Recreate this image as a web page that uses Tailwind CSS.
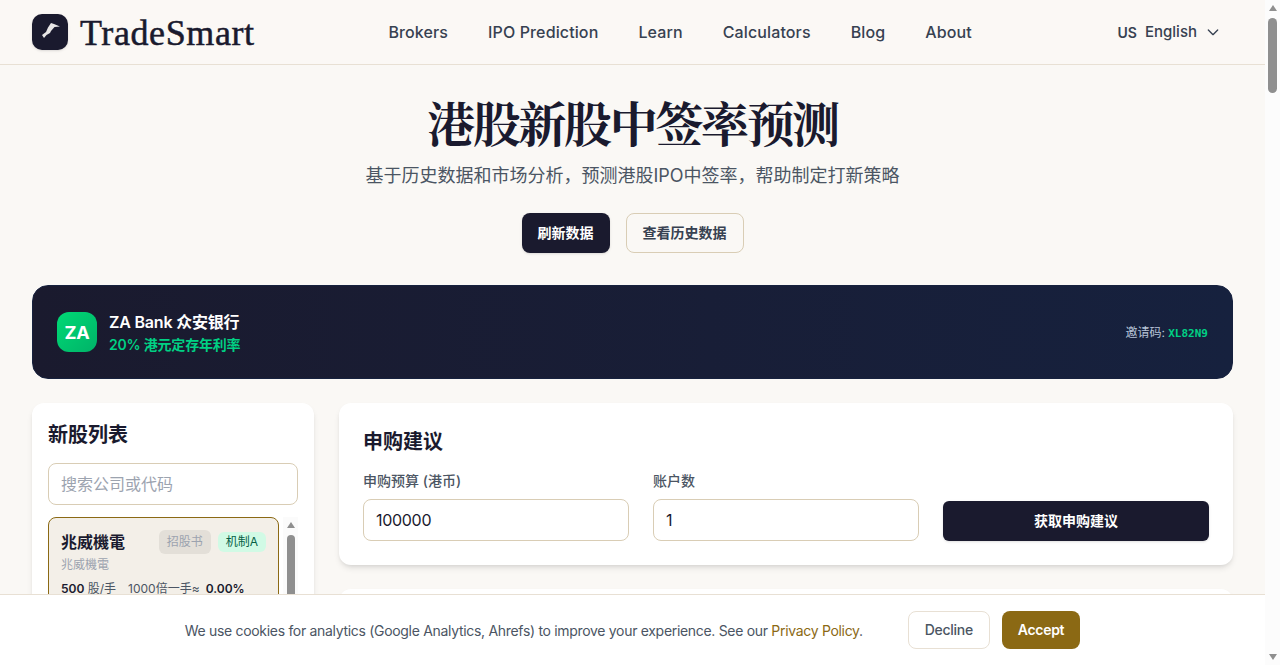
<!DOCTYPE html>
<html lang="zh">
<head>
    <meta charset="UTF-8">
    <meta name="viewport" content="width=device-width, initial-scale=1.0">
    <title>港股新股中签率预测 - TradeSmart</title>
    <script src="https://cdn.jsdelivr.net/npm/@tailwindcss/browser@4"></script>
</head>
<body class="pr-[15px] bg-[#faf8f5] text-[#1a1a2e] font-['Inter','Noto_Sans_CJK_SC',sans-serif]">
    <!-- Header -->
    <header class="h-[65px] px-8 flex items-center justify-between border-b border-[#e8e0d4] bg-[#fbf8f5]">
        <a href="#" class="flex items-center gap-3">
            <span class="w-9 h-9 rounded-[10px] bg-[#1a1a2e] flex items-center justify-center shadow-sm">
                <svg class="w-5 h-5" viewBox="0 0 20 20" fill="#e8e6e6">
                    <path d="M2 13 L6 10 L8 5.5 L11 1 L14 2 L20 4.5 L14.5 5 L11 9 L10 11 L6.5 13 L4 16 Z"/>
                </svg>
            </span>
            <span class="font-['Liberation_Serif',serif] text-4xl leading-none mt-0.5 text-[#1a1a2e] tracking-[0.6px] [-webkit-text-stroke:0.5px_#1a1a2e]">TradeSmart</span>
        </a>
        <nav class="flex items-center gap-10 text-base font-medium tracking-[0.12px] text-[#374151]">
            <a href="#">Brokers</a>
            <a href="#">IPO Prediction</a>
            <a href="#">Learn</a>
            <a href="#">Calculators</a>
            <a href="#">Blog</a>
            <a href="#">About</a>
        </nav>
        <button class="flex items-center px-3 py-2 text-[#374151] text-[15px] font-medium">
            <span class="text-sm font-semibold mr-2 mt-0.5">US</span>
            <span class="mt-px">English</span>
            <svg class="w-4 h-4 ml-2" viewBox="0 0 24 24" fill="none" stroke="currentColor" stroke-width="2" stroke-linecap="round" stroke-linejoin="round"><path d="m5 9 7 7 7-7"/></svg>
        </button>
    </header>

    <main class="px-8 pt-7 pb-10">
        <!-- Hero -->
        <section class="text-center">
            <h1 class="text-5xl leading-[66px] font-bold tracking-[-2.4px] font-['Liberation_Serif','Noto_Serif_CJK_SC','Noto_Sans_CJK_SC',serif] text-[#1a1a2e]">港股新股中签率预测</h1>
            <p class="mt-[3px] text-lg leading-7 text-[#4b5563]">基于历史数据和市场分析，预测港股IPO中签率，帮助制定打新策略</p>
            <div class="mt-[23px] flex justify-center gap-4">
                <button class="h-10 px-4 rounded-lg bg-[#1a1a2e] text-white text-sm font-semibold shadow-sm">刷新数据</button>
                <button class="h-10 px-4 rounded-lg border border-[#d9cdb5] text-[#374151] text-sm font-semibold">查看历史数据</button>
            </div>
        </section>

        <!-- Promo banner -->
        <a href="#" class="mt-8 h-[94px] px-6 rounded-2xl border border-[#16213e] bg-gradient-to-r from-[#1a1a2e] to-[#16213e] flex items-center justify-between">
            <div class="flex items-center gap-3">
                <span class="w-10 h-10 pt-0.5 rounded-xl bg-gradient-to-br from-[#00d975] to-[#00b368] text-white font-bold text-lg tracking-[-0.3px] flex items-center justify-center">ZA</span>
                <div>
                    <div class="text-white font-semibold text-base leading-6 tracking-[-0.2px]">ZA Bank 众安银行</div>
                    <div class="mt-px text-[#00d084] font-semibold text-sm leading-5 tracking-[-0.2px]">20% 港元定存年利率</div>
                </div>
            </div>
            <div class="mt-[3px] text-xs text-[#b8c4d8]">邀请码: <span class="font-['DejaVu_Sans_Mono',monospace] text-[11px] font-bold text-[#00d084]">XL82N9</span></div>
        </a>

        <div class="mt-6 grid grid-cols-[282px_1fr] gap-[25px] items-start">
            <!-- IPO list -->
            <aside class="bg-white rounded-xl shadow-md p-4">
                <h2 class="pt-0.5 text-xl leading-7 font-bold text-[#1a1a2e] mb-3.5">新股列表</h2>
                <input type="text" placeholder="搜索公司或代码" class="w-full h-[42px] px-3 rounded-lg border border-[#d9cdb5] text-base placeholder:text-[#9ca3af]">
                <div class="mt-3 flex gap-1 h-[400px]">
                    <div class="flex-1 min-w-0">
                        <div class="h-[200px] rounded-lg border border-[#8b6914] bg-[#f3efe8] px-3 py-3">
                            <div class="flex items-center">
                                <span class="font-bold text-base text-[#1a1a2e]">兆威機電</span>
                                <span class="ml-auto px-2 py-0.5 rounded-md bg-[#e3dfd8] text-xs leading-5 text-[#9ca3af]">招股书</span>
                                <span class="ml-[7px] px-2 py-0.5 rounded-md bg-[#d1fae5] text-xs leading-4 text-[#065f46]">机制A</span>
                            </div>
                            <div class="mt-[3px] text-xs leading-4 text-[#9ca3af]">兆威機電</div>
                            <div class="mt-2 text-xs leading-4 text-[#4b5563] flex gap-3">
                                <span><b class="font-semibold text-[#1a1a2e]">500</b> 股/手</span>
                                <span>1000倍一手≈<b class="ml-1.5 font-semibold text-[#1a1a2e]">0.00%</b></span>
                            </div>
                        </div>
                    </div>
                    <div class="w-[15px] bg-[#fbfbfb] flex flex-col items-center pt-[5px]">
                        <span class="w-0 h-0 border-x-[4px] border-x-transparent border-b-[6px] border-b-[#8f8f8f]"></span>
                        <span class="mt-[7px] w-2 h-24 rounded-full bg-[#8f8f8f]"></span>
                    </div>
                </div>
            </aside>

            <div class="flex flex-col gap-6">
                <!-- Subscription advice -->
                <section class="bg-white rounded-xl shadow-md p-6">
                    <h2 class="pt-px text-xl leading-7 font-bold text-[#1a1a2e] mb-[15px]">申购建议</h2>
                    <div class="grid grid-cols-3 gap-6 items-end">
                        <label class="block">
                            <span class="block text-sm leading-5 font-medium text-[#4b5563] mb-2">申购预算 (港币)</span>
                            <input type="number" value="100000" class="w-full h-[42px] px-3 rounded-lg border border-[#d9cdb5] text-base tracking-[-0.3px] text-[#1a1a2e]">
                        </label>
                        <label class="block">
                            <span class="block text-sm leading-5 font-medium text-[#4b5563] mb-2">账户数</span>
                            <input type="number" value="1" class="w-full h-[42px] px-3 rounded-lg border border-[#d9cdb5] text-base tracking-[-0.3px] text-[#1a1a2e]">
                        </label>
                        <button class="h-10 rounded-md bg-[#1a1a2e] text-white text-sm font-semibold shadow-sm">获取申购建议</button>
                    </div>
                </section>
                <section class="bg-white rounded-xl shadow-md p-6 h-[400px]"></section>
            </div>
        </div>
    </main>

    <!-- Cookie consent -->
    <div class="fixed bottom-0 left-0 right-[15px] h-[71px] bg-white border-t border-[#e8e0d4] flex items-center justify-center gap-[45px]">
        <p class="mt-px text-sm tracking-[-0.31px] text-[#4b5563]">We use cookies for analytics (Google Analytics, Ahrefs) to improve your experience. See our <a href="#" class="text-[#8b6914]">Privacy Policy</a>.</p>
        <div class="flex gap-3">
            <button class="h-[38px] px-4 rounded-lg border border-[#e8e0d4] text-sm tracking-[-0.3px] font-medium text-[#4b5563]">Decline</button>
            <button class="h-[38px] px-4 rounded-lg bg-[#8b6914] text-sm tracking-[-0.3px] font-semibold text-white">Accept</button>
        </div>
    </div>

    <!-- Window scrollbar -->
    <div class="fixed top-0 right-0 bottom-0 w-[15px] bg-[#fcfcfc] flex flex-col items-center pt-[5px] pb-[5px]">
        <span class="w-0 h-0 border-x-[4px] border-x-transparent border-b-[6px] border-b-[#8f8f8f]"></span>
        <span class="mt-[7px] w-[9px] h-[75px] rounded-full bg-[#8f8f8f]"></span>
        <span class="mt-auto w-0 h-0 border-x-[4px] border-x-transparent border-t-[6px] border-t-[#8f8f8f]"></span>
    </div>
</body>
</html>
